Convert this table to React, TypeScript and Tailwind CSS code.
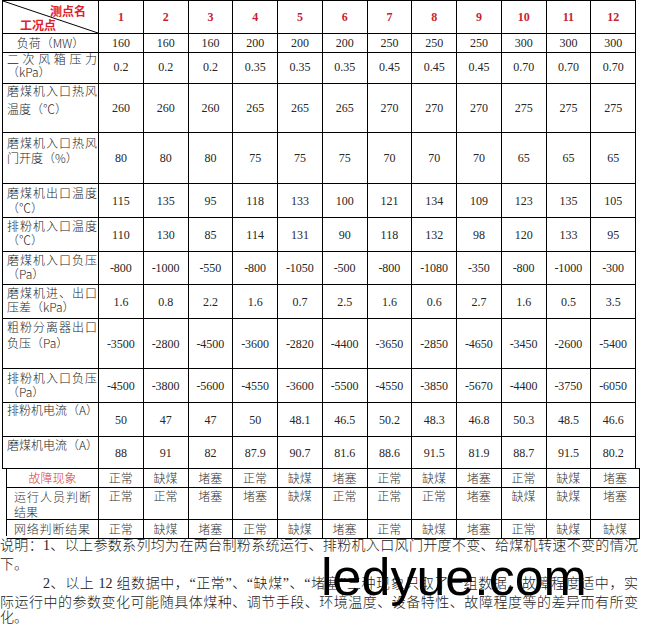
import React from "react";

type Row = {
  label: string[];
  center?: boolean;
  pt?: number;
  lh?: number;
  gap?: number;
  h: number;
  values: string[];
};

const rows: Row[] = [
  { label: ["负荷（MW）"], center: true, h: 17, values: ["160", "160", "160", "200", "200", "200", "250", "250", "250", "300", "300", "300"] },
  { label: ["二次风箱压力", "（kPa）"], pt: 1, lh: 13, h: 33, values: ["0.2", "0.2", "0.2", "0.35", "0.35", "0.35", "0.45", "0.45", "0.45", "0.70", "0.70", "0.70"] },
  { label: ["磨煤机入口热风", "温度（℃）"], pt: 0, lh: 14, gap: 4, h: 49, values: ["260", "260", "260", "265", "265", "265", "270", "270", "270", "275", "275", "275"] },
  { label: ["磨煤机入口热风", "门开度（%）"], pt: 2, lh: 15, h: 51, values: ["80", "80", "80", "75", "75", "75", "70", "70", "70", "65", "65", "65"] },
  { label: ["磨煤机出口温度", "（℃）"], pt: 1, lh: 15, h: 34, values: ["115", "135", "95", "118", "133", "100", "121", "134", "109", "123", "135", "105"] },
  { label: ["排粉机入口温度", "（℃）"], pt: 1, lh: 14, h: 34, values: ["110", "130", "85", "114", "131", "90", "118", "132", "98", "120", "133", "95"] },
  { label: ["磨煤机入口负压", "（Pa）"], pt: 1, lh: 14, h: 33, values: ["-800", "-1000", "-550", "-800", "-1050", "-500", "-800", "-1080", "-350", "-800", "-1000", "-300"] },
  { label: ["磨煤机进、出口", "压差（kPa）"], pt: 1, lh: 14, h: 34, values: ["1.6", "0.8", "2.2", "1.6", "0.7", "2.5", "1.6", "0.6", "2.7", "1.6", "0.5", "3.5"] },
  { label: ["粗粉分离器出口", "负压（Pa）"], pt: 0, lh: 16, h: 50, values: ["-3500", "-2800", "-4500", "-3600", "-2820", "-4400", "-3650", "-2850", "-4650", "-3450", "-2600", "-5400"] },
  { label: ["排粉机入口负压", "（Pa）"], pt: 2, lh: 14, h: 34, values: ["-4500", "-3800", "-5600", "-4550", "-3600", "-5500", "-4550", "-3850", "-5670", "-4400", "-3750", "-6050"] },
  { label: ["排粉机电流（A）"], pt: 0, lh: 14, h: 34, values: ["50", "47", "47", "50", "48.1", "46.5", "50.2", "48.3", "46.8", "50.3", "48.5", "46.6"] },
  { label: ["磨煤机电流（A）"], pt: 1, lh: 14, h: 32, values: ["88", "91", "82", "87.9", "90.7", "81.6", "88.6", "91.5", "81.9", "88.7", "91.5", "80.2"] },
];

const fault = ["正常", "缺煤", "堵塞", "正常", "缺煤", "堵塞", "正常", "缺煤", "堵塞", "正常", "缺煤", "堵塞"];
const operator = ["正常", "正常", "堵塞", "堵塞", "缺煤", "正常", "正常", "正常", "堵塞", "缺煤", "缺煤", "堵塞"];
const network = ["正常", "缺煤", "堵塞", "正常", "缺煤", "堵塞", "正常", "缺煤", "堵塞", "正常", "缺煤", "缺煤"];

const cjk = "font-['Noto_Sans_CJK_SC',sans-serif]";
const serif = "font-['Liberation_Serif','Noto_Sans_CJK_SC',serif]";

export default function App() {
  return (
    <div className="relative w-[645px] h-[625px] bg-white overflow-hidden text-[#262626]">
      {/* Upper table */}
      <div className="ml-[2px] w-[634px] border-l border-t border-black">
        {/* Header row */}
        <div className="grid grid-cols-[96px_repeat(12,44.75px)] h-[33px]">
          <div className="relative border-r border-b border-black">
            <svg className="absolute inset-0 w-full h-full" preserveAspectRatio="none" viewBox="0 0 95 32">
              <line x1="0" y1="0" x2="95" y2="32" stroke="#000" strokeWidth="1" />
            </svg>
            <span className={`absolute left-[47px] top-[3px] text-[12px] leading-[14px] font-bold text-[#e0202a] ${cjk}`}>测点名</span>
            <span className={`absolute left-[17px] top-[17px] text-[12px] leading-[14px] font-bold text-[#e0202a] ${cjk}`}>工况点</span>
          </div>
          {Array.from({ length: 12 }, (_, i) => (
            <div
              key={i}
              className={`flex items-center justify-center border-r border-b border-black text-[12px] font-bold text-[#c81e32] ${serif}`}
            >
              {i + 1}
            </div>
          ))}
        </div>
        {rows.map((r, ri) => (
          <div key={ri} className="grid grid-cols-[96px_repeat(12,44.75px)]" style={{ height: r.h }}>
            {r.center ? (
              <div className={`flex items-center justify-center border-r border-b border-black text-[12px] font-light ${cjk}`}>
                {r.label[0]}
              </div>
            ) : (
              <div
                className={`flex flex-col pl-[4px] pr-[1px] border-r border-b border-black text-[12px] font-light ${cjk}`}
                style={{ paddingTop: r.pt, lineHeight: `${r.lh}px`, gap: r.gap ?? 0 }}
              >
                {r.label.map((l, li) => (
                  <div
                    key={li}
                    className={`whitespace-nowrap ${li === 0 && r.label.length > 1 ? "[text-align-last:justify]" : ""}`}
                  >
                    {l}
                  </div>
                ))}
              </div>
            )}
            {r.values.map((v, vi) => (
              <div
                key={vi}
                className={`flex items-center justify-center border-r border-b border-black text-[12px] ${serif}`}
              >
                {v}
              </div>
            ))}
          </div>
        ))}
      </div>

      {/* Lower rows */}
      <div className={`-mt-px ml-[6px] w-[634px] border-l border-t border-black text-[12px] font-light text-[#333] ${cjk}`}>
        <div className="grid grid-cols-[92px_repeat(11,44.75px)_1fr] h-[19px]">
          <div className="flex items-center justify-center border-r border-b border-black text-[#d64040]">故障现象</div>
          {fault.map((v, i) => (
            <div key={i} className="flex items-center justify-center border-r border-b border-black">
              {v}
            </div>
          ))}
        </div>
        <div className="grid grid-cols-[92px_repeat(11,44.75px)_1fr] h-[32px]">
          <div className="flex flex-col pl-[7px] pr-[7px] pt-[1px] leading-[15px] border-r border-b border-black">
            <div className="whitespace-nowrap [text-align-last:justify]">运行人员判断</div>
            <div className="whitespace-nowrap">结果</div>
          </div>
          {operator.map((v, i) => (
            <div key={i} className="flex justify-center pt-[1px] leading-[14px] border-r border-b border-black">
              {v}
            </div>
          ))}
        </div>
        <div className="grid grid-cols-[92px_repeat(11,44.75px)_1fr] h-[16px]">
          <div className="flex items-center pl-[7px] pr-[8px] border-r border-b border-black">
            <div className="w-full whitespace-nowrap [text-align-last:justify]">网络判断结果</div>
          </div>
          {network.map((v, i) => (
            <div key={i} className="flex items-center justify-center border-r border-b border-black">
              {v}
            </div>
          ))}
        </div>
      </div>

      {/* Notes */}
      <div className={`text-[14px] font-light text-[#222] ${serif}`}>
        <div className="w-[638px] h-[19px] leading-[19px] whitespace-nowrap [text-align-last:justify]">
          说明：1、以上参数系列均为在两台制粉系统运行、排粉机入口风门开度不变、给煤机转速不变的情况
        </div>
        <div className="h-[19px] leading-[19px] whitespace-nowrap">下。</div>
        <div className="w-[638px] pl-[43px] h-[19px] leading-[19px] whitespace-nowrap [text-align-last:justify]">
          2、以上 12 组数据中，“正常”、“缺煤”、“堵塞”三种现象只取了一组数据，故障程度适中，实
        </div>
        <div className="w-[638px] h-[19px] leading-[19px] whitespace-nowrap [text-align-last:justify]">
          际运行中的参数变化可能随具体煤种、调节手段、环境温度、设备特性、故障程度等的差异而有所变
        </div>
        <div className="h-[11px] leading-[11px] whitespace-nowrap">化。</div>
      </div>

      {/* Watermark */}
      <div className="absolute left-[321px] top-[551px] text-[52px] leading-none text-black font-['Liberation_Sans',Arial,sans-serif] whitespace-nowrap">
        ledyue.com
      </div>
    </div>
  );
}
